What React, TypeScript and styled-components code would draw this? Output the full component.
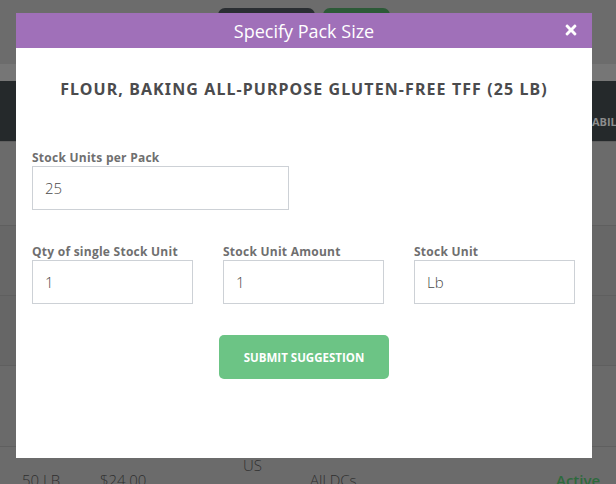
import React from "react";
import styled, { createGlobalStyle } from "styled-components";
import { FaTimes } from "react-icons/fa";

const Global = createGlobalStyle`
  html, body { margin: 0; padding: 0; }
  body { background: #6b6b6b; font-family: "Open Sans", "Liberation Sans", sans-serif; }
  * { box-sizing: border-box; }
`;

const Page = styled.div`
  position: relative;
  width: 616px;
  height: 484px;
  overflow: hidden;
  background: #6b6b6b;
`;

const TopBar = styled.div`
  height: 64px;
  background: #6c6c6c;
  display: flex;
  gap: 8px;
  padding: 8px 0 0 218px;
`;

const TopButton = styled.div<{ $w: number; $bg: string }>`
  width: ${(p) => p.$w}px;
  height: 30px;
  border-radius: 7px;
  background: ${(p) => p.$bg};
`;

const SubBar = styled.div`
  height: 17px;
  background: #767676;
`;

const TableHead = styled.div`
  height: 60px;
  background: #25292b;
  display: grid;
  grid-template-columns: 592px max-content;
  align-items: center;
  padding-top: 22px;
  overflow: hidden;
  white-space: nowrap;
`;

const HeadText = styled.span`
  grid-column: 2;
  font-family: "Open Sans", sans-serif;
  font-weight: 700;
  font-size: 11px;
  line-height: 14px;
  color: #8c8c8c;
`;

const Row = styled.div<{ $h: number; $bg: string }>`
  height: ${(p) => p.$h}px;
  background: ${(p) => p.$bg};
  border-top: 1px solid #5f5f5f;
  display: flex;
  align-items: flex-start;
  overflow: hidden;
`;

const Cell = styled.span<{ $w: number; $green?: boolean; $mt: number }>`
  width: ${(p) => p.$w}px;
  flex: none;
  font-family: "Open Sans", sans-serif;
  font-size: 15px;
  line-height: 20px;
  color: ${(p) => (p.$green ? "#2d6a3c" : "#2f2f2f")};
  font-weight: ${(p) => (p.$green ? 600 : 300)};
  margin-top: ${(p) => p.$mt}px;
`;

const Modal = styled.div`
  position: absolute;
  left: 16px;
  top: 13px;
  width: 576px;
  height: 445px;
  background: #ffffff;
  display: flex;
  flex-direction: column;
`;

const Header = styled.div`
  position: relative;
  height: 35px;
  background: #a070b9;
  display: flex;
  align-items: center;
  justify-content: center;
`;

const Title = styled.h2`
  margin: 0;
  font-family: "Open Sans", sans-serif;
  font-weight: 400;
  font-size: 18px;
  color: #ffffff;
  padding-top: 1px;
`;

const Close = styled.button`
  position: absolute;
  right: 13px;
  top: 9px;
  padding: 0;
  border: 0;
  background: none;
  color: #ffffff;
  display: flex;
`;

const Body = styled.div`
  padding: 30px 16px 0 16px;
  display: flex;
  flex-direction: column;
`;

const Product = styled.h3`
  margin: 0;
  text-align: center;
  font-family: "Noto Sans", "Open Sans", sans-serif;
  font-weight: 700;
  font-size: 16px;
  line-height: 22px;
  letter-spacing: 1.1px;
  color: #4b4b4d;
  white-space: nowrap;
`;

const FieldRow = styled.div<{ $cols: string; $mt: number }>`
  display: grid;
  grid-template-columns: ${(p) => p.$cols};
  column-gap: 30px;
  margin-top: ${(p) => p.$mt}px;
`;

const Field = styled.label`
  display: flex;
  flex-direction: column;
`;

const Label = styled.span`
  font-family: "Open Sans", sans-serif;
  font-weight: 700;
  font-size: 12px;
  line-height: 16px;
  letter-spacing: 0.25px;
  color: #6f6f6f;
  white-space: nowrap;
`;

const Input = styled.input`
  height: 44px;
  width: 100%;
  border: 1px solid #cdd1d6;
  border-radius: 0;
  padding: 0 12px;
  font-family: "Open Sans", sans-serif;
  font-weight: 300;
  font-size: 15px;
  color: #4a4a4a;
  background: #fff;
  outline: none;
`;

const Actions = styled.div`
  display: flex;
  justify-content: center;
  margin-top: 31px;
`;

const Submit = styled.button`
  width: 170px;
  height: 44px;
  border: 0;
  border-radius: 5px;
  background: #6cc485;
  color: #ffffff;
  font-family: "Open Sans", sans-serif;
  font-weight: 700;
  font-size: 11.5px;
`;

export default function App() {
  return (
    <Page>
      <Global />
      <TopBar>
        <TopButton $w={97} $bg="#2a2e32" />
        <TopButton $w={67} $bg="#2d5a38" />
      </TopBar>
      <SubBar />
      <TableHead>
        <HeadText>ABILITY</HeadText>
      </TableHead>
      <Row $h={84} $bg="#6b6b6b" />
      <Row $h={70} $bg="#676767" />
      <Row $h={70} $bg="#666666" />
      <Row $h={81} $bg="#6a6a6a" />
      <Row $h={60} $bg="#6b6b6b">
        <Cell $w={78} $mt={23} style={{ marginLeft: 22 }}>50 LB</Cell>
        <Cell $w={143} $mt={23}>$24.00</Cell>
        <Cell $w={67} $mt={8}>US</Cell>
        <Cell $w={246} $mt={23}>All DCs</Cell>
        <Cell $w={60} $mt={23} $green>Active</Cell>
      </Row>
      <Modal role="dialog">
        <Header>
          <Title>Specify Pack Size</Title>
          <Close aria-label="Close">
            <FaTimes size={16} />
          </Close>
        </Header>
        <Body>
          <Product>FLOUR, BAKING ALL-PURPOSE GLUTEN-FREE TFF (25 LB)</Product>
          <FieldRow $cols="257px" $mt={50}>
            <Field>
              <Label>Stock Units per Pack</Label>
              <Input defaultValue="25" />
            </Field>
          </FieldRow>
          <FieldRow $cols="repeat(3, 161px)" $mt={34}>
            <Field>
              <Label>Qty of single Stock Unit</Label>
              <Input defaultValue="1" />
            </Field>
            <Field>
              <Label>Stock Unit Amount</Label>
              <Input defaultValue="1" />
            </Field>
            <Field>
              <Label>Stock Unit</Label>
              <Input defaultValue="Lb" />
            </Field>
          </FieldRow>
          <Actions>
            <Submit>SUBMIT SUGGESTION</Submit>
          </Actions>
        </Body>
      </Modal>
    </Page>
  );
}
